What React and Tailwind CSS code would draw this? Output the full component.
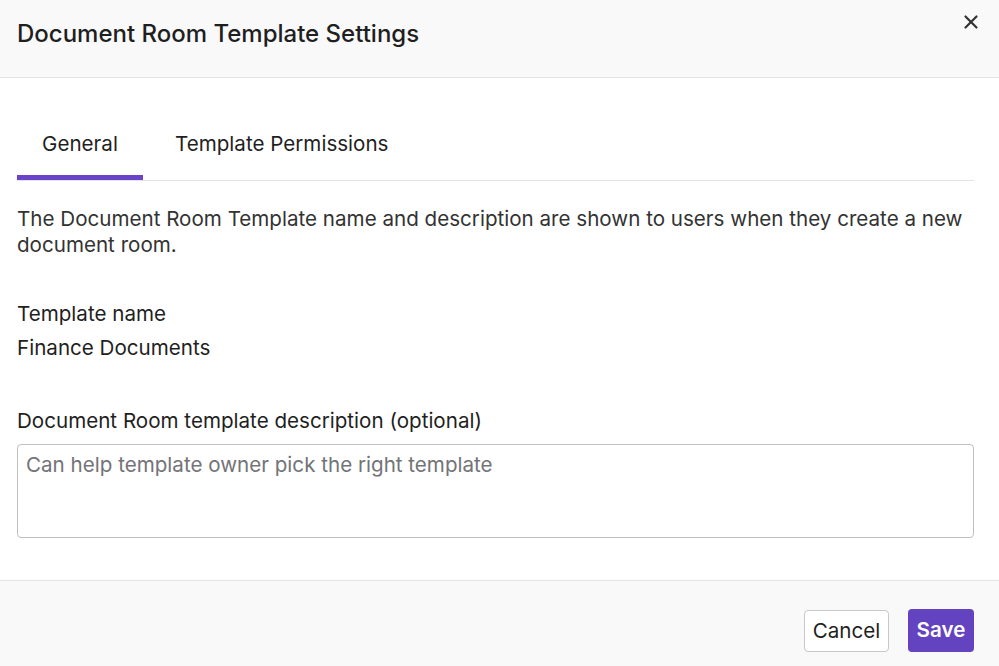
import { X } from 'lucide-react'

const App = () => {
  return (
    <div className="w-[999px] h-[666px] bg-white flex flex-col text-[#1f1f1f]" style={{ fontFamily: 'Inter, "Noto Sans", sans-serif' }}>
      {/* Header */}
      <div className="h-[78px] shrink-0 bg-[#f9f9f9] border-b border-[#e3e3e6] flex items-start justify-between pl-[17px] pr-[17px]">
        <h1 className="mt-[19px] text-[24px] leading-[30px] font-medium text-[#1f1f1f]">Document Room Template Settings</h1>
        <button className="mt-[11px] text-[#333]">
          <X className="h-[22px] w-[22px]" strokeWidth={2.4} />
        </button>
      </div>

      {/* Body */}
      <div className="flex-1 pl-[17px] pr-[25px] text-[20.6px]">
        {/* Tabs */}
        <div className="mt-[51px] flex border-b border-[#e3e3e6]">
          <div className="w-[126px] h-[51px] flex items-start justify-center border-b-[5px] border-[#6b43c9] -mb-px">General</div>
          <div className="ml-[32px] h-[51px]">Template Permissions</div>
        </div>

        <p className="mt-[25px] leading-[26px] text-[#333]">
          The Document Room Template name and description are shown to users when they create a new document room.
        </p>

        <div className="mt-[43px] leading-[26px]">Template name</div>
        <div className="mt-[8px] leading-[26px]">Finance Documents</div>

        <div className="mt-[47px] leading-[26px]">Document Room template description (optional)</div>
        <textarea
          className="mt-[10px] w-full h-[94px] border border-[#bfbfc4] rounded-[4px] px-[8px] py-[7px] leading-[26px] placeholder-[#737378] resize-none outline-none"
          placeholder="Can help template owner pick the right template"
        />
      </div>

      {/* Footer */}
      <div className="h-[86px] shrink-0 bg-[#f9f9f9] border-t border-[#e3e3e6] flex items-start justify-end gap-[19px] pt-[28px] pr-[25px] text-[20.6px]">
        <button className="mt-px h-[42px] w-[85px] bg-white border border-[#c8c8cc] rounded-[4px] text-[#1f1f1f]">Cancel</button>
        <button className="h-[43px] w-[66px] bg-[#6343bf] rounded-[4px] font-semibold text-white">Save</button>
      </div>
    </div>
  )
}

export default App
